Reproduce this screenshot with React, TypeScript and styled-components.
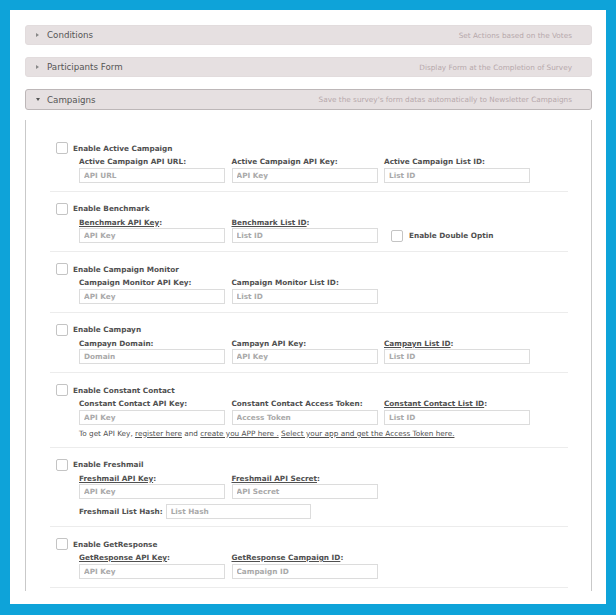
import React from 'react'
import styled, { createGlobalStyle } from 'styled-components'

const GlobalStyle = createGlobalStyle`
  html, body {
    margin: 0;
    padding: 0;
    background: #0ea3d9;
  }
  body {
    font-family: "DejaVu Sans", Verdana, sans-serif;
    color: #505050;
  }
`

const Frame = styled.div`
  margin: 10px;
  width: 596px;
  height: 594px;
  background: #ffffff;
  box-sizing: border-box;
  padding: 15px 14px 0 15px;
  overflow: hidden;
`

const Header = styled.div<{ $open?: boolean }>`
  display: flex;
  align-items: center;
  justify-content: space-between;
  height: ${p => (p.$open ? '21px' : '20px')};
  box-sizing: border-box;
  margin-bottom: ${p => (p.$open ? '10px' : '12px')};
  padding: 0 19px 0 10px;
  background: #e6e0e1;
  border: 1px solid ${p => (p.$open ? '#bdb7b8' : '#e2dcdd')};
  border-radius: 3px;
`

const HeaderTitle = styled.div`
  display: flex;
  align-items: center;
  font-size: 8.7px;
  color: #555;
`

const Arrow = styled.span<{ $open?: boolean }>`
  display: inline-block;
  width: 0;
  height: 0;
  margin-right: ${p => (p.$open ? '7px' : '8px')};
  border-style: solid;
  ${p =>
    p.$open
      ? 'border-width: 3px 2.5px 0 2.5px; border-color: #555 transparent transparent transparent;'
      : 'border-width: 2.5px 0 2.5px 3px; border-color: transparent transparent transparent #888;'}
`

const HeaderNote = styled.div`
  font-size: 7.3px;
  color: #b7a9ac;
`

const Content = styled.div`
  border-left: 1px solid #c9c9c9;
  border-right: 1px solid #c9c9c9;
  padding: 11px 0 3px 24px;
`

const Row = styled.div`
  width: 518px;
  box-sizing: border-box;
  padding: 11px 0 8px 6px;
  border-bottom: 1px solid #ececec;
`

const Check = styled.span`
  display: inline-block;
  width: 12px;
  height: 12px;
  box-sizing: border-box;
  border: 1px solid #c4c4c4;
  border-radius: 2px;
  background: #fff;
  flex-shrink: 0;
`

const RowTitle = styled.div`
  display: flex;
  align-items: center;
  height: 12px;
  gap: 5px;
  font-size: 7.3px;
  font-weight: bold;
`

const Fields = styled.div`
  display: grid;
  grid-template-columns: repeat(3, 146px);
  column-gap: 6.5px;
  margin: 3px 0 0 23px;
`

const Field = styled.div`
  display: flex;
  flex-direction: column;
`

const Label = styled.div`
  height: 10.5px;
  line-height: 10.5px;
  font-size: 7.3px;
  font-weight: bold;
  white-space: nowrap;
`

const Ref = styled.span`
  text-decoration: underline;
`

const Input = styled.input<{ $w?: number }>`
  width: ${p => p.$w ?? 146}px;
  height: 15px;
  box-sizing: border-box;
  margin: 0;
  padding: 0 4px;
  border: 1px solid #dcdcdc;
  background: #fff;
  font-family: "DejaVu Sans", Verdana, sans-serif;
  font-size: 7.3px;
  font-weight: bold;
  outline: none;
  &::placeholder {
    color: #a9a9a9;
  }
`

const Optin = styled.div`
  display: flex;
  align-items: center;
  height: 15px;
  gap: 6px;
  padding-left: 7px;
  font-size: 7.3px;
  font-weight: bold;
`

const Help = styled.div`
  margin: 3px 0 0 23px;
  height: 11px;
  line-height: 11px;
  font-size: 7.3px;
  white-space: nowrap;
  a {
    color: #505050;
    text-decoration: underline;
  }
`

const HashLine = styled.div`
  display: flex;
  align-items: center;
  gap: 3px;
  margin: 5px 0 0 23px;
  height: 14px;
  font-size: 7.3px;
  font-weight: bold;
`

type FieldDef = { label: string; ph: string; link?: boolean }
type RowDef = {
  title: string
  fields: FieldDef[]
  optin?: boolean
  help?: boolean
  hash?: boolean
}

const rows: RowDef[] = [
  {
    title: 'Enable Active Campaign',
    fields: [
      { label: 'Active Campaign API URL', ph: 'API URL' },
      { label: 'Active Campaign API Key', ph: 'API Key' },
      { label: 'Active Campaign List ID', ph: 'List ID' },
    ],
  },
  {
    title: 'Enable Benchmark',
    fields: [
      { label: 'Benchmark API Key', ph: 'API Key', link: true },
      { label: 'Benchmark List ID', ph: 'List ID', link: true },
    ],
    optin: true,
  },
  {
    title: 'Enable Campaign Monitor',
    fields: [
      { label: 'Campaign Monitor API Key', ph: 'API Key' },
      { label: 'Campaign Monitor List ID', ph: 'List ID' },
    ],
  },
  {
    title: 'Enable Campayn',
    fields: [
      { label: 'Campayn Domain', ph: 'Domain' },
      { label: 'Campayn API Key', ph: 'API Key' },
      { label: 'Campayn List ID', ph: 'List ID', link: true },
    ],
  },
  {
    title: 'Enable Constant Contact',
    fields: [
      { label: 'Constant Contact API Key', ph: 'API Key' },
      { label: 'Constant Contact Access Token', ph: 'Access Token' },
      { label: 'Constant Contact List ID', ph: 'List ID', link: true },
    ],
    help: true,
  },
  {
    title: 'Enable Freshmail',
    fields: [
      { label: 'Freshmail API Key', ph: 'API Key', link: true },
      { label: 'Freshmail API Secret', ph: 'API Secret', link: true },
    ],
    hash: true,
  },
  {
    title: 'Enable GetResponse',
    fields: [
      { label: 'GetResponse API Key', ph: 'API Key', link: true },
      { label: 'GetResponse Campaign ID', ph: 'Campaign ID', link: true },
    ],
  },
]

const sections = [
  { title: 'Conditions', note: 'Set Actions based on the Votes' },
  { title: 'Participants Form', note: 'Display Form at the Completion of Survey' },
]

const App = () => {
  return (
    <>
      <GlobalStyle />
      <Frame>
        {sections.map(s => (
          <Header key={s.title}>
            <HeaderTitle>
              <Arrow />
              {s.title}
            </HeaderTitle>
            <HeaderNote>{s.note}</HeaderNote>
          </Header>
        ))}
        <Header $open>
          <HeaderTitle>
            <Arrow $open />
            Campaigns
          </HeaderTitle>
          <HeaderNote>Save the survey's form datas automatically to Newsletter Campaigns</HeaderNote>
        </Header>
        <Content>
          {rows.map(row => (
            <Row key={row.title}>
              <RowTitle>
                <Check />
                {row.title}
              </RowTitle>
              <Fields>
                {row.fields.map(f => (
                  <Field key={f.label}>
                    <Label>
                      {f.link ? <Ref>{f.label}</Ref> : f.label}:
                    </Label>
                    <Input placeholder={f.ph} />
                  </Field>
                ))}
                {row.optin && (
                  <Field>
                    <Label />
                    <Optin>
                      <Check />
                      Enable Double Optin
                    </Optin>
                  </Field>
                )}
              </Fields>
              {row.help && (
                <Help>
                  To get API Key, <a>register here</a> and <a>create you APP here .</a>{' '}
                  <a>Select your app and get the Access Token here.</a>
                </Help>
              )}
              {row.hash && (
                <HashLine>
                  Freshmail List Hash:
                  <Input $w={145} placeholder="List Hash" />
                </HashLine>
              )}
            </Row>
          ))}
        </Content>
      </Frame>
    </>
  )
}

export default App
